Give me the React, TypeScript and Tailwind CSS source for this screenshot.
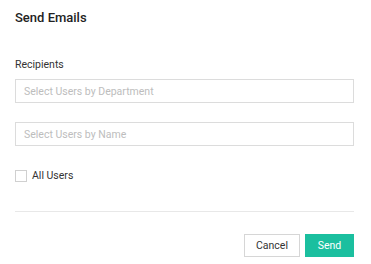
export default function App() {
  return (
    <div className="w-[371px] h-[264px] bg-white px-[15px] pt-[8px] font-['Roboto',sans-serif] text-[#333]">
      <h1 className="text-[13px] leading-[20px] font-medium text-[#222]">Send Emails</h1>

      <div className="mt-[29px] text-[10.5px] leading-[16px] text-[#333]">Recipients</div>

      <input
        className="mt-[6px] block w-[339px] h-[24px] border border-[#dcdcdc] px-[8px] text-[10.5px] outline-none placeholder:text-[#bdbdbd]"
        placeholder="Select Users by Department"
      />
      <input
        className="mt-[19px] block w-[339px] h-[24px] border border-[#dcdcdc] px-[8px] text-[10.5px] outline-none placeholder:text-[#bdbdbd]"
        placeholder="Select Users by Name"
      />

      <label className="mt-[23px] flex items-center gap-[5px] h-[14px]">
        <span className="w-[12px] h-[12px] border border-[#d0d0d0] bg-white" />
        <span className="text-[10.5px] text-[#333]">All Users</span>
      </label>

      <div className="mt-[28px] w-[339px] h-px bg-[#e8e8e8]" />

      <div className="mt-[22px] w-[339px] flex justify-end gap-[5px]">
        <button className="w-[56px] h-[23px] border border-[#d6d6d6] bg-white text-[10.5px] text-[#333]">
          Cancel
        </button>
        <button className="w-[49px] h-[23px] bg-[#1bbf9f] text-[10.5px] text-white">Send</button>
      </div>
    </div>
  );
}
